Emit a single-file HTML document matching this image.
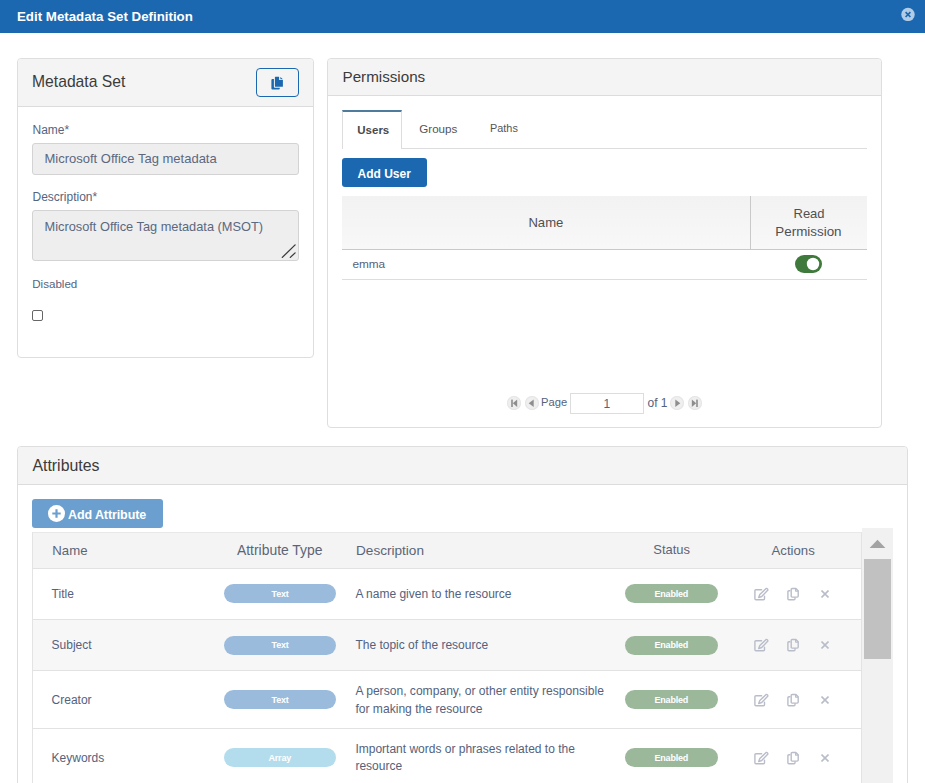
<!DOCTYPE html>
<html><head><meta charset="utf-8">
<style>
*{box-sizing:border-box;margin:0;padding:0}
html,body{width:925px;height:783px;overflow:hidden;background:#fff;font-family:"Liberation Sans",sans-serif;color:#485670;position:relative}
.a{position:absolute}
.t{position:absolute;line-height:1;white-space:nowrap}
#hdr{left:0;top:0;width:925px;height:33px;background:#1b68b1}
.panel{position:absolute;border:1px solid #dedede;border-radius:4px;background:#fff}
.phead{position:absolute;left:0;top:0;right:0;background:#f4f4f4;border-bottom:1px solid #dcdcdc;border-radius:4px 4px 0 0}
.ptitle{color:#3b3b3b}
.lbl{font-size:12px;color:#56647e}
.inp{position:absolute;background:#eeeeee;border:1px solid #d3d3d3;border-radius:3px}
.itxt{font-size:12.8px;color:#5b6880}
.hcol{font-size:13.2px;color:#5b6577}
.cell{font-size:12px;color:#54627d}
.badge{position:absolute;height:19px;border-radius:10px}
.btxt{font-size:9px;font-weight:bold;color:#fff;letter-spacing:-0.2px}
.pgc{position:absolute;width:14px;height:14px;border-radius:50%;background:#efefef;box-shadow:inset 0 0 0 1px #e5e5e5}
</style></head><body>
<!-- header -->
<div id="hdr" class="a"></div>
<div class="t" style="left:17px;top:10px;font-size:13.3px;font-weight:bold;color:#fff">Edit Metadata Set Definition</div>
<svg class="a" style="left:901px;top:7px" width="14" height="14" viewBox="0 0 14 14">
  <circle cx="7" cy="7.4" r="6.7" fill="#b2cce6"/>
  <path d="M4.6 5.2L9.4 10M9.4 5.2L4.6 10" stroke="#1b68b1" stroke-width="1.7"/>
</svg>

<!-- Metadata Set panel -->
<div class="panel" style="left:17px;top:58px;width:297px;height:300px">
  <div class="phead" style="height:48px"></div>
</div>
<div class="t ptitle" style="left:32px;top:74.1px;font-size:15.7px">Metadata Set</div>
<div class="a" style="left:256px;top:68px;width:43px;height:29px;border:1.6px solid #1b68b1;border-radius:4px"></div>
<svg class="a" style="left:270px;top:76px" width="14" height="14" viewBox="0 0 14 14">
  <path d="M3.9 3 H2.4 Q1.4 3 1.4 4 V12.6 Q1.4 13.6 2.4 13.6 H8.8 Q9.8 13.6 9.8 12.6 V11.8 H4.9 Q3.9 11.8 3.9 10.8 Z" fill="#1b68b1"/>
  <path d="M5.4 0.8 H9.1 V4.1 H12.9 V10.3 Q12.9 10.8 12.4 10.8 H5.4 Q4.9 10.8 4.9 10.3 V1.3 Q4.9 0.8 5.4 0.8 Z" fill="#1b68b1"/>
  <path d="M10.4 0.9 L12.9 3.2 H10.4 Z" fill="#1b68b1"/>
</svg>
<div class="t lbl" style="left:32.5px;top:123.8px">Name*</div>
<div class="inp" style="left:32px;top:143px;width:267px;height:32px"></div>
<div class="t itxt" style="left:44.5px;top:152.1px;font-size:13px">Microsoft Office Tag metadata</div>
<div class="t lbl" style="left:32.5px;top:190.8px">Description*</div>
<div class="inp" style="left:32px;top:210px;width:267px;height:51px"></div>
<div class="t itxt" style="left:44.5px;top:220.5px">Microsoft Office Tag metadata (MSOT)</div>
<svg class="a" style="left:280px;top:243px" width="18" height="16" viewBox="0 0 18 16">
  <path d="M2.3 14.4 L15.1 1.9 M10.3 14.4 L15.1 9.9" stroke="#3a3a3a" stroke-width="1.3" stroke-linecap="round"/>
</svg>
<div class="t lbl" style="left:32.2px;top:278.2px;font-size:11.6px">Disabled</div>
<div class="a" style="left:32px;top:310px;width:11px;height:11px;border:1px solid #666;border-radius:2px;background:#fff"></div>

<!-- Permissions panel -->
<div class="panel" style="left:327px;top:58px;width:555px;height:370px">
  <div class="phead" style="height:37px"></div>
</div>
<div class="t ptitle" style="left:342.5px;top:69.3px;font-size:15.2px">Permissions</div>
<!-- tabs -->
<div class="a" style="left:342px;top:148px;width:525px;height:1px;background:#dddddd"></div>
<div class="a" style="left:342px;top:110px;width:60px;height:39px;background:#fff;border-left:1px solid #dddddd;border-right:1px solid #dddddd;border-top:2px solid #4f7c9c"></div>
<div class="t" style="left:357.3px;top:124.6px;font-size:11.5px;color:#505050;font-weight:bold;color:#4a4a4a">Users</div>
<div class="t" style="left:419.3px;top:122.8px;font-size:11.6px;color:#555">Groups</div>
<div class="t" style="left:490px;top:123.3px;font-size:10.9px;color:#555">Paths</div>
<!-- add user -->
<div class="a" style="left:342px;top:158px;width:85px;height:29px;background:#1b68b1;border-radius:3px"></div>
<div class="t" style="left:357.5px;top:168px;font-size:12px;font-weight:bold;color:#fff">Add User</div>
<!-- table -->
<div class="a" style="left:342px;top:196px;width:525px;height:54px;background:linear-gradient(#f2f2f2,#f8f8f8);border-bottom:1px solid #c9c9c9"></div>
<div class="a" style="left:750px;top:196px;width:1px;height:53px;background:#c9c9c9"></div>
<div class="t hcol" style="left:528.4px;top:215.8px;font-size:13.1px;color:#505050">Name</div>
<div class="t hcol" style="left:793.5px;top:206.9px;font-size:13px;color:#505050">Read</div>
<div class="t hcol" style="left:775.3px;top:224.9px;font-size:13.4px;color:#505050">Permission</div>
<div class="t cell" style="left:352.4px;top:259.4px;font-size:11.8px">emma</div>
<div class="a" style="left:342px;top:279px;width:525px;height:1px;background:#dddddd"></div>
<svg class="a" style="left:795px;top:255px" width="27" height="18" viewBox="0 0 27 18">
  <rect x="0" y="0" width="27" height="18" rx="9" fill="#3f7a3c"/>
  <circle cx="18" cy="9" r="6.2" fill="#fff"/>
</svg>
<!-- pager -->
<div class="pgc" style="left:507px;top:395.5px"></div>
<div class="pgc" style="left:525px;top:395.5px"></div>
<div class="pgc" style="left:670px;top:395.5px"></div>
<div class="pgc" style="left:688px;top:395.5px"></div>
<svg class="a" style="left:507px;top:395.5px" width="14" height="14" viewBox="0 0 14 14"><rect x="4.2" y="3.6" width="1.6" height="7.4" fill="#8e8e8e"/><path d="M10.2 3.6 V11 L5.8 7.3 Z" fill="#8e8e8e"/></svg>
<svg class="a" style="left:525px;top:395.5px" width="14" height="14" viewBox="0 0 14 14"><path d="M8.7 3.6 V11 L3.7 7.3 Z" fill="#8e8e8e"/></svg>
<svg class="a" style="left:670px;top:395.5px" width="14" height="14" viewBox="0 0 14 14"><path d="M5.3 3.6 V11 L10.3 7.3 Z" fill="#8e8e8e"/></svg>
<svg class="a" style="left:688px;top:395.5px" width="14" height="14" viewBox="0 0 14 14"><rect x="8.2" y="3.6" width="1.6" height="7.4" fill="#8e8e8e"/><path d="M3.8 3.6 V11 L8.2 7.3 Z" fill="#8e8e8e"/></svg>
<div class="t cell" style="left:541px;top:397.2px;font-size:11.2px">Page</div>
<div class="a" style="left:570px;top:393px;width:74px;height:21px;border:1px solid #dddddd"></div>
<div class="t cell" style="left:603.5px;top:398px;font-size:12px">1</div>
<div class="t cell" style="left:647.5px;top:397px;font-size:12px">of 1</div>

<!-- Attributes panel -->
<div class="panel" style="left:17px;top:446px;width:891px;height:400px">
  <div class="phead" style="height:38px"></div>
</div>
<div class="t ptitle" style="left:32.4px;top:457.8px;font-size:15.9px">Attributes</div>
<div class="a" style="left:32px;top:499px;width:131px;height:29px;background:#6a9fcf;border-radius:3px"></div>
<svg class="a" style="left:47.5px;top:505px" width="17" height="17" viewBox="0 0 17 17">
  <circle cx="8.5" cy="8.5" r="8.5" fill="#fff"/>
  <path d="M8.5 4.3V12.7M4.3 8.5H12.7" stroke="#6a9fcf" stroke-width="2.2"/>
</svg>
<div class="t" style="left:68px;top:509.4px;font-size:12.5px;font-weight:bold;color:#fff;letter-spacing:-0.1px">Add Attribute</div>

<!-- attributes table -->
<div class="a" style="left:32px;top:532px;width:830px;height:260px;border-left:1px solid #e3e3e3;border-right:1px solid #e3e3e3;border-top:1px solid #e8e8e8"></div>
<div class="a" style="left:33px;top:533px;width:828px;height:36px;background:#f4f4f4;border-bottom:1px solid #e2e2e2"></div>
<div class="t hcol" style="left:52.3px;top:543.8px">Name</div>
<div class="t hcol" style="left:237px;top:543.8px;font-size:13.9px">Attribute Type</div>
<div class="t hcol" style="left:356px;top:543.8px;font-size:13.6px">Description</div>
<div class="t hcol" style="left:653.3px;top:543.8px;font-size:12.95px">Status</div>
<div class="t hcol" style="left:771.5px;top:543.8px;font-size:13.2px">Actions</div>

<!-- rows -->
<div class="a" style="left:33px;top:619px;width:828px;height:1px;background:#e2e2e2"></div>
<div class="a" style="left:33px;top:620px;width:828px;height:50px;background:#f7f7f7"></div>
<div class="a" style="left:33px;top:670px;width:828px;height:1px;background:#e2e2e2"></div>
<div class="a" style="left:33px;top:728px;width:828px;height:1px;background:#e2e2e2"></div>

<div class="t cell" style="left:51.6px;top:588.4px">Title</div>
<div class="t cell" style="left:51.6px;top:639px">Subject</div>
<div class="t cell" style="left:51.6px;top:693.8px">Creator</div>
<div class="t cell" style="left:51.6px;top:751.8px">Keywords</div>

<div class="badge" style="left:224px;top:584px;width:112px;background:#9bbbdc"></div>
<div class="badge" style="left:224px;top:636px;width:112px;background:#9bbbdc"></div>
<div class="badge" style="left:224px;top:690px;width:112px;background:#9bbbdc"></div>
<div class="badge" style="left:224px;top:748px;width:112px;background:#b3dded"></div>
<div class="t btxt" style="left:271.5px;top:589.5px">Text</div>
<div class="t btxt" style="left:271.5px;top:640.5px">Text</div>
<div class="t btxt" style="left:271.5px;top:695.5px">Text</div>
<div class="t btxt" style="left:268.5px;top:753.5px">Array</div>

<div class="t cell" style="left:355.4px;top:587.9px">A name given to the resource</div>
<div class="t cell" style="left:355.4px;top:638.9px">The topic of the resource</div>
<div class="t cell" style="left:355.4px;top:683.3px;line-height:17.8px;font-size:12.1px">A person, company, or other entity responsible<br>for making the resource</div>
<div class="t cell" style="left:355.4px;top:741.2px;line-height:17.2px">Important words or phrases related to the<br>resource</div>

<div class="badge" style="left:625px;top:584px;width:93px;background:#9bb89b"></div>
<div class="badge" style="left:625px;top:636px;width:93px;background:#9bb89b"></div>
<div class="badge" style="left:625px;top:690px;width:93px;background:#9bb89b"></div>
<div class="badge" style="left:625px;top:748px;width:93px;background:#9bb89b"></div>
<div class="t btxt" style="left:654.5px;top:589.5px">Enabled</div>
<div class="t btxt" style="left:654.5px;top:640.5px">Enabled</div>
<div class="t btxt" style="left:654.5px;top:695.5px">Enabled</div>
<div class="t btxt" style="left:654.5px;top:753.5px">Enabled</div>

<!-- action icons (defs) -->
<svg width="0" height="0" style="position:absolute">
  <defs>
    <g id="ied" fill="none" stroke="#b9bdc9" stroke-width="1.4" stroke-linecap="round" stroke-linejoin="round">
      <path d="M8.6 2.7 H2.9 Q1.9 2.7 1.9 3.7 V11.7 Q1.9 12.7 2.9 12.7 H10.5 Q11.5 12.7 11.5 11.7 V9.2"/>
      <path d="M13.1 1.5 Q13.9 1.2 14.5 1.9 Q15.1 2.6 14.7 3.3 L8.7 9.5 L5.7 10.6 L6.8 7.6 Z"/>
    </g>
    <g id="icp" fill="none" stroke="#b9bdc9" stroke-width="1.4" stroke-linejoin="round">
      <path d="M3.4 3.7 H1.9 Q0.9 3.7 0.9 4.7 V11.7 Q0.9 12.7 1.9 12.7 H7 Q8 12.7 8 11.7 V10.3"/>
      <path d="M5.2 1.5 H8.9 L11.2 3.8 V9.1 Q11.2 10.1 10.2 10.1 H5.2 Q4.2 10.1 4.2 9.1 V2.5 Q4.2 1.5 5.2 1.5 Z"/>
      <path d="M8.6 1.6 V4.1 H11.1" stroke-width="1.1"/>
    </g>
    <g id="ix" stroke="#b9bdc9" stroke-width="1.6"><path d="M0.5 0.5 L7.5 7.5 M7.5 0.5 L0.5 7.5"/></g>
  </defs>
</svg>
<svg class="a" style="left:753px;top:587px" width="16" height="14"><use href="#ied"/></svg>
<svg class="a" style="left:787px;top:587px" width="13" height="14"><use href="#icp"/></svg>
<svg class="a" style="left:820.5px;top:590px" width="8" height="8"><use href="#ix"/></svg>
<svg class="a" style="left:753px;top:638px" width="16" height="14"><use href="#ied"/></svg>
<svg class="a" style="left:787px;top:638px" width="13" height="14"><use href="#icp"/></svg>
<svg class="a" style="left:820.5px;top:641px" width="8" height="8"><use href="#ix"/></svg>
<svg class="a" style="left:753px;top:693px" width="16" height="14"><use href="#ied"/></svg>
<svg class="a" style="left:787px;top:693px" width="13" height="14"><use href="#icp"/></svg>
<svg class="a" style="left:820.5px;top:696px" width="8" height="8"><use href="#ix"/></svg>
<svg class="a" style="left:753px;top:751px" width="16" height="14"><use href="#ied"/></svg>
<svg class="a" style="left:787px;top:751px" width="13" height="14"><use href="#icp"/></svg>
<svg class="a" style="left:820.5px;top:754px" width="8" height="8"><use href="#ix"/></svg>

<!-- scrollbar -->
<div class="a" style="left:862px;top:528px;width:31px;height:255px;background:#f1f1f1"></div>
<svg class="a" style="left:869px;top:539px" width="17" height="10"><path d="M0.6 9 L8.5 0.8 L16.4 9 Z" fill="#a3a3a3"/></svg>
<div class="a" style="left:864px;top:559px;width:27px;height:100px;background:#c1c1c1"></div>
</body></html>
